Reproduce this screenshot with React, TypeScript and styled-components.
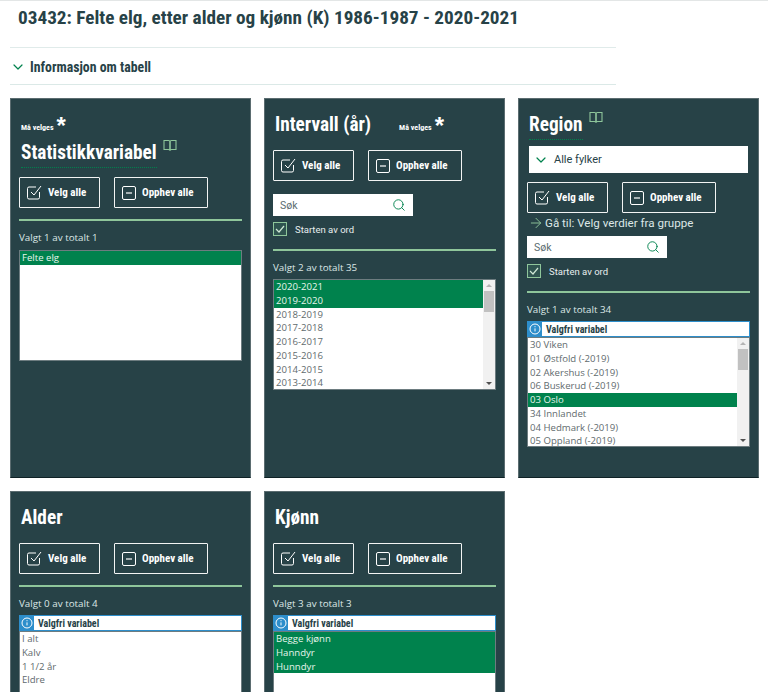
import React from 'react';
import styled, { createGlobalStyle } from 'styled-components';
import { ArrowRight, ChevronDown, Search } from 'lucide-react';

const condensed = `'Roboto Condensed', 'Liberation Sans Narrow', Roboto, sans-serif`;

const GlobalStyle = createGlobalStyle`
	html, body {
		margin: 0;
		padding: 0;
		background: #fff;
		overflow: hidden;
	}
	body {
		font-family: 'Open Sans', sans-serif;
		color: #274247;
	}
`;

const Page = styled.div`
	width: 768px;
	height: 692px;
	overflow: hidden;
	border-top: 1px solid #e3e6e6;
	box-sizing: border-box;
	padding: 0 10px;
`;

const PageTitle = styled.h1`
	font-family: ${condensed};
	font-stretch: condensed;
	font-size: 19.23px;
	line-height: 24px;
	font-weight: 700;
	color: #274247;
	margin: 5px 0 0 8px;
	white-space: nowrap;
`;

const InfoBar = styled.div`
	width: 606px;
	height: 38px;
	margin-top: 17px;
	border-top: 1px solid #e0ebea;
	border-bottom: 1px solid #dbe9e7;
	box-sizing: border-box;
	display: flex;
	align-items: center;
	gap: 4px;
	padding: 1px 0 0 0;
	font-family: ${condensed};
	font-stretch: condensed;
	font-size: 13.8px;
	font-weight: 700;
	color: #274247;
	svg {
		color: #00824d;
	}
`;

const Grid = styled.div`
	display: grid;
	grid-template-columns: repeat(3, 241px);
	grid-auto-rows: 380px;
	gap: 13px;
	margin-top: 13px;
`;

const Panel = styled.section`
	background: #274247;
	border: 1px solid #5b6c70;
	border-bottom-color: #0f2226;
	box-sizing: border-box;
	padding: 0 8px;
	display: flex;
	flex-direction: column;
	color: #fff;
`;

const HeadRow = styled.div<{ $h: number; $pt?: number }>`
	height: ${(p) => p.$h}px;
	padding-top: ${(p) => p.$pt ?? 0}px;
	box-sizing: border-box;
	display: flex;
	align-items: flex-start;
`;

const Title = styled.h2<{ $dotted?: boolean }>`
	margin: 0 0 0 2px;
	font-family: ${condensed};
	font-stretch: condensed;
	font-size: 19.3px;
	line-height: 26px;
	font-weight: 700;
	color: #fff;
	white-space: nowrap;
	padding-bottom: 1px;
	border-bottom: 1px dotted ${(p) => (p.$dotted ? '#00824d' : 'transparent')};
`;

const Required = styled.span<{ $ml: number; $mt?: number }>`
	display: inline-flex;
	align-items: flex-start;
	gap: 3px;
	margin: ${(p) => p.$mt ?? 0}px 0 0 ${(p) => p.$ml}px;
	font-family: ${condensed};
	font-stretch: condensed;
	font-weight: 700;
	font-size: 8px;
	line-height: 12px;
	color: #fff;
	white-space: nowrap;
	b {
		font-size: 24px;
		line-height: 16px;
		font-family: 'Liberation Sans', sans-serif;
		font-weight: 700;
		position: relative;
		top: -4px;
	}
`;

const BookMark = styled.svg`
	margin: -1px 0 0 6px;
	flex: none;
`;

const Buttons = styled.div<{ $mb: number }>`
	display: flex;
	gap: 14px;
	margin-bottom: ${(p) => p.$mb}px;
`;

const ActionButton = styled.button<{ $w: number }>`
	width: ${(p) => p.$w}px;
	height: 31px;
	background: transparent;
	border: 1px solid #f2f4f4;
	border-radius: 1px;
	box-sizing: border-box;
	color: #fff;
	padding: 0 0 0 7px;
	display: flex;
	align-items: center;
	gap: 6px;
	font-family: ${condensed};
	font-stretch: condensed;
	font-weight: 700;
	font-size: 11px;
	cursor: pointer;
`;

const Select = styled.div`
	height: 27px;
	margin: 0 2px 9px 2px;
	background: #fff;
	display: flex;
	align-items: center;
	gap: 5px;
	padding-left: 4px;
	font-family: Roboto, sans-serif;
	font-size: 11px;
	color: #274247;
	svg {
		color: #00824d;
	}
`;

const GoTo = styled.div`
	height: 16px;
	margin: 2px 0 5px 1px;
	display: flex;
	align-items: center;
	gap: 1px;
	font-family: Roboto, sans-serif;
	font-size: 11.6px;
	color: #dce7e6;
	svg {
		color: #8fc69b;
	}
`;

const SearchBox = styled.div`
	width: 140px;
	height: 22px;
	background: #fff;
	box-sizing: border-box;
	padding: 0 7px;
	display: flex;
	align-items: center;
	justify-content: space-between;
	font-family: Roboto, sans-serif;
	font-size: 10.5px;
	color: #5b6c70;
	svg {
		color: #00824d;
	}
`;

const WordStart = styled.label`
	height: 14px;
	margin-top: 6px;
	display: flex;
	align-items: center;
	gap: 8px;
	font-family: Roboto, sans-serif;
	font-size: 9.5px;
	color: #e8eeee;
`;

const CheckMark = styled.span`
	width: 14px;
	height: 14px;
	box-sizing: border-box;
	background: #2f5450;
	border: 1px solid #8fc69b;
	display: flex;
	align-items: center;
	justify-content: center;
`;

const Rule = styled.hr<{ $mt?: number }>`
	width: 100%;
	height: 2px;
	border: 0;
	margin: ${(p) => p.$mt ?? 0}px 0 0 0;
	background: #8fc69b;
`;

const Count = styled.div<{ $mb?: number }>`
	font-size: 9.8px;
	line-height: 14px;
	color: #dce7e6;
	margin: 10px 0 ${(p) => p.$mb ?? 4}px 0;
`;

const Optional = styled.div`
	height: 16px;
	display: flex;
	align-items: center;
	background: #fff;
	border: 1px solid #2d8ecb;
	border-left: 0;
	box-sizing: border-box;
	gap: 4px;
	font-family: ${condensed};
	font-stretch: condensed;
	font-weight: 700;
	font-size: 10px;
	color: #274247;
`;

const InfoIcon = styled.span`
	width: 15px;
	height: 16px;
	background: #2d8ecb;
	display: flex;
	align-items: center;
	justify-content: center;
`;

const ListBox = styled.div<{ $h: number }>`
	height: ${(p) => p.$h}px;
	box-sizing: border-box;
	background: #fff;
	border: 1px solid #6d7c80;
	display: flex;
	overflow: hidden;
`;

const Options = styled.ul`
	list-style: none;
	margin: 0;
	padding: 0;
	flex: 1;
	min-width: 0;
`;

const Option = styled.li<{ $selected: boolean }>`
	height: 13.75px;
	line-height: 13.75px;
	padding-left: 2px;
	font-size: 9.6px;
	white-space: nowrap;
	color: ${(p) => (p.$selected ? '#e6f5ec' : '#5f6b6e')};
	background: ${(p) => (p.$selected ? '#00824d' : 'transparent')};
`;

const ScrollBar = styled.div`
	width: 12px;
	flex: none;
	background: #f1f1f1;
	display: flex;
	flex-direction: column;
	align-items: stretch;
`;

const ScrollArrow = styled.div<{ $up?: boolean }>`
	height: 11px;
	flex: none;
	display: flex;
	align-items: center;
	justify-content: center;
	&::after {
		content: '';
		border-left: 3px solid transparent;
		border-right: 3px solid transparent;
		${(p) => (p.$up ? 'border-bottom: 3px solid #b4b4b4;' : 'border-top: 3px solid #505050;')}
	}
`;

const ScrollThumb = styled.div`
	height: 21px;
	margin: 0 1px;
	background: #c1c1c1;
`;

const ScrollSpace = styled.div`
	flex: 1;
`;

const BookIcon = () => (
	<BookMark width='14' height='13' viewBox='0 0 14 13' fill='none' stroke='#8fc69b' strokeWidth='1.1'>
		<path d='M1 1.5h4.5c.9 0 1.5.5 1.5 1.3v8.7c0-.7-.6-1-1.5-1H1z' />
		<path d='M13 1.5H8.5C7.6 1.5 7 2 7 2.8v8.7c0-.7.6-1 1.5-1H13z' />
	</BookMark>
);

const CheckAllIcon = () => (
	<svg width='15' height='15' viewBox='0 0 15 15' fill='none' stroke='#fff' strokeWidth='1'>
		<path d='M12.5 7v5.5a1.5 1.5 0 0 1-1.5 1.5H2a1.5 1.5 0 0 1-1.5-1.5v-9A1.5 1.5 0 0 1 2 2h7' />
		<path d='M4 7l3 3 7-9' />
	</svg>
);

const MinusIcon = () => (
	<svg width='14' height='14' viewBox='0 0 14 14' fill='none' stroke='#fff' strokeWidth='1'>
		<rect x='.5' y='.5' width='13' height='13' rx='1.5' />
		<path d='M4 7h6' strokeWidth='1.2' />
	</svg>
);

const SmallInfo = () => (
	<svg width='12' height='12' viewBox='0 0 12 12' fill='none' stroke='#fff'>
		<circle cx='6' cy='6' r='5' />
		<path d='M6 5.4v3M6 3.2v1' />
	</svg>
);

const TinyCheck = () => (
	<svg width='10' height='8' viewBox='0 0 10 8' fill='none' stroke='#cfe8d5' strokeWidth='1.2'>
		<path d='M1 4l3 3 5-6' />
	</svg>
);

function ActionRow({ mb }: { mb: number }) {
	return (
		<Buttons $mb={mb}>
			<ActionButton $w={81}>
				<CheckAllIcon />
				Velg alle
			</ActionButton>
			<ActionButton $w={94}>
				<MinusIcon />
				Opphev alle
			</ActionButton>
		</Buttons>
	);
}

function SearchArea() {
	return (
		<>
			<SearchBox>
				Søk
				<Search size={14} strokeWidth={1.6} />
			</SearchBox>
			<WordStart>
				<CheckMark>
					<TinyCheck />
				</CheckMark>
				Starten av ord
			</WordStart>
		</>
	);
}

type ValueListProps = {
	items: string[];
	selected: string[];
	height: number;
	scroll?: boolean;
};

function ValueList({ items, selected, height, scroll }: ValueListProps) {
	return (
		<ListBox $h={height}>
			<Options>
				{items.map((item) => (
					<Option key={item} $selected={selected.includes(item)}>
						{item}
					</Option>
				))}
			</Options>
			{scroll && (
				<ScrollBar>
					<ScrollArrow $up />
					<ScrollThumb />
					<ScrollSpace />
					<ScrollArrow />
				</ScrollBar>
			)}
		</ListBox>
	);
}

function OptionalLabel() {
	return (
		<Optional>
			<InfoIcon>
				<SmallInfo />
			</InfoIcon>
			Valgfri variabel
		</Optional>
	);
}

export default function App() {
	const years = ['2020-2021', '2019-2020', '2018-2019', '2017-2018', '2016-2017', '2015-2016', '2014-2015', '2013-2014'];
	const regions = [
		'30 Viken',
		'01 Østfold (-2019)',
		'02 Akershus (-2019)',
		'06 Buskerud (-2019)',
		'03 Oslo',
		'34 Innlandet',
		'04 Hedmark (-2019)',
		'05 Oppland (-2019)',
	];

	return (
		<Page>
			<GlobalStyle />
			<PageTitle>03432: Felte elg, etter alder og kjønn (K) 1986-1987 - 2020-2021</PageTitle>
			<InfoBar>
				<ChevronDown size={16} strokeWidth={1.8} />
				Informasjon om tabell
			</InfoBar>
			<Grid>
				<Panel>
					<HeadRow $h={41} $pt={23}>
						<Required $ml={2}>
							Må velges <b>*</b>
						</Required>
					</HeadRow>
					<HeadRow $h={37}>
						<Title $dotted>Statistikkvariabel</Title>
						<BookIcon />
					</HeadRow>
					<ActionRow mb={11} />
					<Rule />
					<Count $mb={5}>Valgt 1 av totalt 1</Count>
					<ValueList items={['Felte elg']} selected={['Felte elg']} height={111} />
				</Panel>

				<Panel>
					<HeadRow $h={51} $pt={13}>
						<Title>Intervall (år)</Title>
						<Required $ml={28} $mt={10}>
							Må velges <b>*</b>
						</Required>
					</HeadRow>
					<ActionRow mb={13} />
					<SearchArea />
					<Rule $mt={13} />
					<Count>Valgt 2 av totalt 35</Count>
					<ValueList items={years} selected={['2020-2021', '2019-2020']} height={111} scroll />
				</Panel>

				<Panel>
					<HeadRow $h={47} $pt={13}>
						<Title $dotted>Region</Title>
						<BookIcon />
					</HeadRow>
					<Select>
						<ChevronDown size={16} strokeWidth={1.8} />
						Alle fylker
					</Select>
					<ActionRow mb={0} />
					<GoTo>
						<ArrowRight size={16} strokeWidth={1.4} />
						Gå til: Velg verdier fra gruppe
					</GoTo>
					<SearchArea />
					<Rule $mt={13} />
					<Count>Valgt 1 av totalt 34</Count>
					<OptionalLabel />
					<ValueList items={regions} selected={['03 Oslo']} height={110} scroll />
				</Panel>

				<Panel>
					<HeadRow $h={51} $pt={13}>
						<Title>Alder</Title>
					</HeadRow>
					<ActionRow mb={11} />
					<Rule />
					<Count>Valgt 0 av totalt 4</Count>
					<OptionalLabel />
					<ValueList items={['I alt', 'Kalv', '1 1/2 år', 'Eldre']} selected={[]} height={110} />
				</Panel>

				<Panel>
					<HeadRow $h={51} $pt={13}>
						<Title>Kjønn</Title>
					</HeadRow>
					<ActionRow mb={11} />
					<Rule />
					<Count>Valgt 3 av totalt 3</Count>
					<OptionalLabel />
					<ValueList
						items={['Begge kjønn', 'Hanndyr', 'Hunndyr']}
						selected={['Begge kjønn', 'Hanndyr', 'Hunndyr']}
						height={110}
					/>
				</Panel>
			</Grid>
		</Page>
	);
}
